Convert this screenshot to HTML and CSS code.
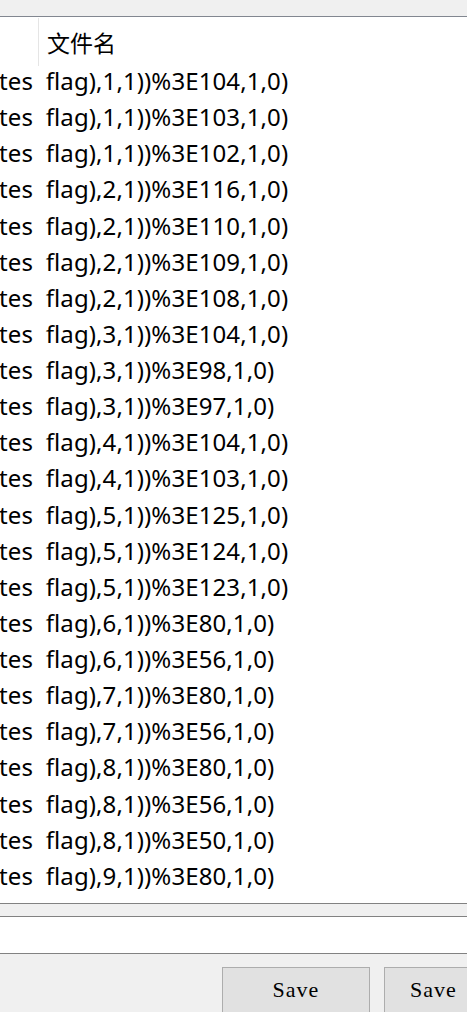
FILE: index.html
```html
<!DOCTYPE html>
<html lang="zh">
<head>
<meta charset="UTF-8">
<meta name="viewport" content="width=device-width, initial-scale=1.0">
<title>文件名</title>
<link rel="stylesheet" href="styles.css">
</head>
<body>
    <div class="toolbar"></div>

    <div class="grid">
        <div class="grid-header">
            <div class="col-blank"></div>
            <div class="col-name">文件名</div>
        </div>

        <div class="rows">
            <div class="row">tes  flag),1,1))%3E104,1,0)</div>
            <div class="row">tes  flag),1,1))%3E103,1,0)</div>
            <div class="row">tes  flag),1,1))%3E102,1,0)</div>
            <div class="row">tes  flag),2,1))%3E116,1,0)</div>
            <div class="row">tes  flag),2,1))%3E110,1,0)</div>
            <div class="row">tes  flag),2,1))%3E109,1,0)</div>
            <div class="row">tes  flag),2,1))%3E108,1,0)</div>
            <div class="row">tes  flag),3,1))%3E104,1,0)</div>
            <div class="row">tes  flag),3,1))%3E98,1,0)</div>
            <div class="row">tes  flag),3,1))%3E97,1,0)</div>
            <div class="row">tes  flag),4,1))%3E104,1,0)</div>
            <div class="row">tes  flag),4,1))%3E103,1,0)</div>
            <div class="row">tes  flag),5,1))%3E125,1,0)</div>
            <div class="row">tes  flag),5,1))%3E124,1,0)</div>
            <div class="row">tes  flag),5,1))%3E123,1,0)</div>
            <div class="row">tes  flag),6,1))%3E80,1,0)</div>
            <div class="row">tes  flag),6,1))%3E56,1,0)</div>
            <div class="row">tes  flag),7,1))%3E80,1,0)</div>
            <div class="row">tes  flag),7,1))%3E56,1,0)</div>
            <div class="row">tes  flag),8,1))%3E80,1,0)</div>
            <div class="row">tes  flag),8,1))%3E56,1,0)</div>
            <div class="row">tes  flag),8,1))%3E50,1,0)</div>
            <div class="row">tes  flag),9,1))%3E80,1,0)</div>
            <div class="row">tes  flag),9,1))%3E56,1,0)</div>
        </div>

        <div class="hscroll"></div>
    </div>

    <div class="path-box"></div>

    <div class="actions">
        <button class="btn">Save</button>
        <button class="btn btn-narrow">Save</button>
    </div>
</body>
</html>
```

FILE: styles.css
```css
html, body {
    margin: 0;
    padding: 0;
}

body {
    width: 467px;
    height: 1012px;
    overflow: hidden;
    background: #f0f0f0;
    font-family: 'Noto Sans', 'Noto Sans CJK SC', sans-serif;
    color: #000;
}

.toolbar {
    height: 16px;
    background: #f0f0f0;
    border-bottom: 1px solid #828790;
}

.grid {
    background: #fff;
}

.grid-header {
    display: flex;
    height: 45px;
    padding-top: 1px;
    box-sizing: content-box;
}

.col-blank {
    width: 38px;
    border-right: 1px solid #e5e5e5;
    margin-bottom: -3px;
}

.col-name {
    padding-left: 8px;
    font-family: 'Noto Sans CJK SC', sans-serif;
    font-size: 23px;
    line-height: 48px;
}

.rows {
    height: 840px;
    overflow: hidden;
}

.row {
    height: 36.14px;
    line-height: 36px;
    font-size: 24px;
    letter-spacing: 0.1px;
    white-space: pre;
    margin-left: -1px;
}

.hscroll {
    height: 12px;
    background: #f0f0f0;
    border-top: 1px solid #828282;
    border-bottom: 1px solid #828282;
}

.path-box {
    height: 36px;
    background: #fff;
    border-bottom: 1px solid #828282;
}

.actions {
    display: flex;
    gap: 14px;
    padding: 13px 0 0 222px;
}

.btn {
    flex: none;
    width: 148px;
    height: 46px;
    background: #e1e1e1;
    border: 1px solid #adadad;
    border-radius: 0;
    font-family: 'Liberation Serif', serif;
    font-size: 22px;
    letter-spacing: 1px;
    color: #000;
    padding: 0;
}

.btn-narrow {
    width: 99px;
}
```
